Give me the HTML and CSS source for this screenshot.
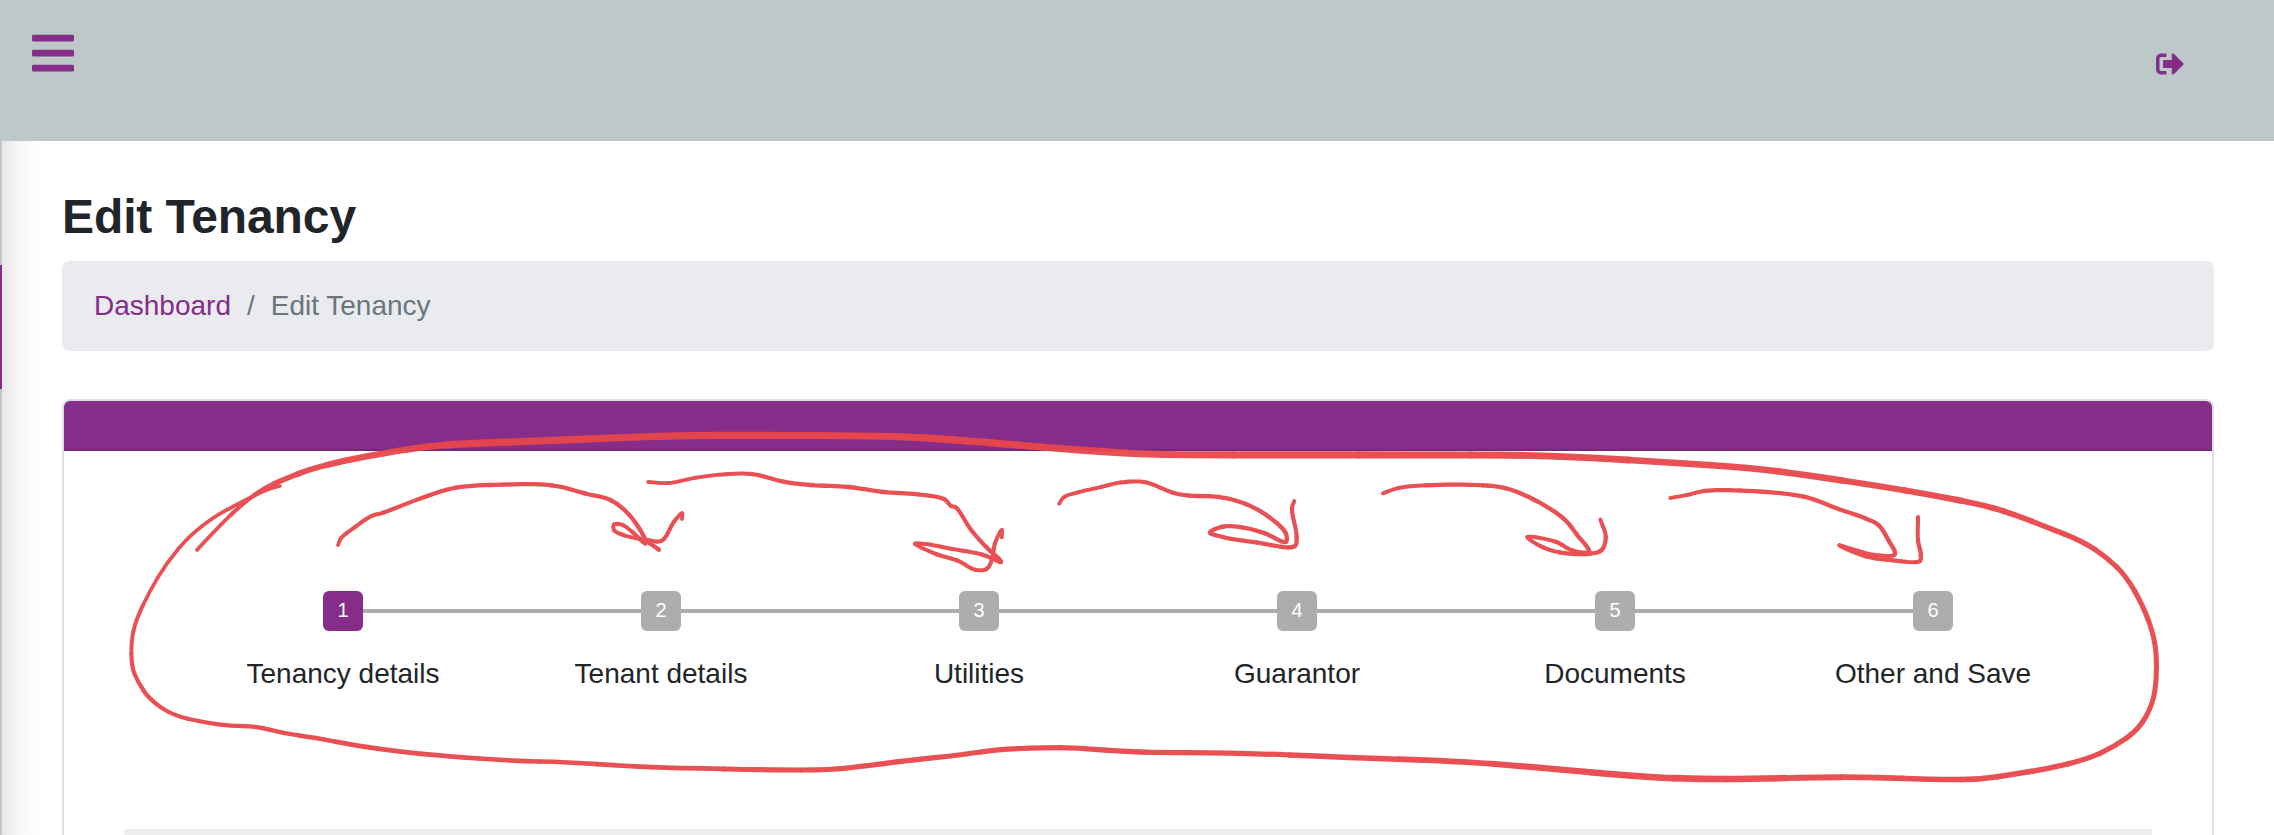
FILE: index.html
```html
<!DOCTYPE html>
<html lang="en">
<head>
<meta charset="utf-8">
<title>Edit Tenancy</title>
<link rel="stylesheet" href="styles.css">
</head>
<body>
<header class="topbar">
  <button class="icon-button" aria-label="Menu">
    <svg class="icon-bars" viewBox="0 0 448 512"><path d="M16 132h416c8.837 0 16-7.163 16-16V76c0-8.837-7.163-16-16-16H16C7.163 60 0 67.163 0 76v40c0 8.837 7.163 16 16 16zm0 160h416c8.837 0 16-7.163 16-16v-40c0-8.837-7.163-16-16-16H16c-8.837 0-16 7.163-16 16v40c0 8.837 7.163 16 16 16zm0 160h416c8.837 0 16-7.163 16-16v-40c0-8.837-7.163-16-16-16H16c-8.837 0-16 7.163-16 16v40c0 8.837 7.163 16 16 16z"/></svg>
  </button>
  <button class="icon-button" aria-label="Sign out">
    <svg class="icon-signout" viewBox="0 0 512 512"><path d="M497 273L329 441c-15 15-41 4.500-41-17v-96H152c-13.300 0-24-10.700-24-24v-96c0-13.300 10.700-24 24-24h136V88c0-21.400 25.900-32 41-17l168 168c9.300 9.400 9.300 24.600 0 34zM192 436v-40c0-6.600-5.400-12-12-12H96c-17.700 0-32-14.300-32-32V160c0-17.700 14.300-32 32-32h84c6.600 0 12-5.400 12-12V76c0-6.600-5.400-12-12-12H96c-53 0-96 43-96 96v192c0 53 43 96 96 96h84c6.600 0 12-5.400 12-12z"/></svg>
  </button>
</header>
<div class="layout">
  <aside class="sidebar"><div class="sidebar-active"></div></aside>
  <main class="content">
    <h1 class="title">Edit Tenancy</h1>
    <nav class="breadcrumb">
      <a class="crumb-link" href="#">Dashboard</a>
      <span class="crumb">/</span>
      <span class="crumb">Edit Tenancy</span>
    </nav>
    <section class="card">
      <div class="card-header"></div>
      <div class="card-body">
        <ol class="steps">
          <li class="step active"><span class="badge">1</span><span class="label">Tenancy details</span></li>
          <li class="step"><span class="badge">2</span><span class="label">Tenant details</span></li>
          <li class="step"><span class="badge">3</span><span class="label">Utilities</span></li>
          <li class="step"><span class="badge">4</span><span class="label">Guarantor</span></li>
          <li class="step"><span class="badge">5</span><span class="label">Documents</span></li>
          <li class="step"><span class="badge">6</span><span class="label">Other and Save</span></li>
        </ol>
        <div class="panel"></div>
      </div>
    </section>
  </main>
</div>
<svg class="ink" viewBox="0 0 2274 835" width="2274" height="835"><g id="ink" class="ink-strokes"></g></svg>
<script src="ink.js"></script>
</body>
</html>
```
FILE: styles.css
```css
* { box-sizing: border-box; }
body {
  margin: 0;
  height: 835px;
  overflow: hidden;
  display: flex;
  flex-direction: column;
  background: #fff;
  color: #212529;
  font-family: "Liberation Sans", Arial, sans-serif;
  font-size: 28px;
}
.topbar {
  height: 141px;
  flex: none;
  display: flex;
  justify-content: space-between;
  align-items: flex-start;
  padding: 28.7px 90px 0 32px;
  background: #bdc9c9;
}
.icon-button {
  display: flex;
  padding: 0;
  border: 0;
  background: none;
  fill: #852d89;
}
.icon-bars { width: 42px; height: 48px; }
.icon-signout { width: 28px; height: 28px; margin-top: 21.5px; }
.layout { flex: 1; min-height: 0; display: flex; }
.sidebar {
  width: 2px;
  flex: none;
  padding-top: 124px;
  background: #bdc9c9;
}
.sidebar-active { height: 124px; background: #852d89; }
.content {
  flex: 1;
  padding: 47px 60px 0;
  background: linear-gradient(to right, #e6e6e6 0, #ededed 6px, #f5f5f5 14px, #fafafa 22px, #fdfdfd 30px, #fff 42px);
}
.title {
  margin: 0 0 15px;
  font-size: 48px;
  line-height: 58px;
  font-weight: 700;
  letter-spacing: -.1px;
}
.breadcrumb {
  height: 90px;
  display: flex;
  align-items: center;
  gap: 16px;
  padding: 0 32px 1px;
  border-radius: 8px;
  background: #e9ebee;
}
.crumb-link { color: #852d89; text-decoration: none; }
.crumb { color: #6c757d; }
.card {
  height: 460px;
  margin-top: 48px;
  border: 2px solid #dfdfdf;
  border-radius: 8px;
  background: #fff;
  overflow: hidden;
}
.card-header {
  height: 50px;
  background: #852d89;
  border-bottom: 2px solid #752879;
}
.card-body { padding: 140px 60px 0; }
.steps {
  display: flex;
  margin: 0;
  padding: 0 60px;
  list-style: none;
}
.step {
  flex: 1;
  display: grid;
  grid-template-columns: 1fr 40px 1fr;
  align-items: center;
}
.step::before, .step::after { content: ""; height: 4px; background: #adadad; grid-row: 1; }
.step::before { grid-column: 1; }
.step::after { grid-column: 3; }
.step:first-child::before, .step:last-child::after { background: none; }
.badge {
  grid-area: 1 / 2;
  height: 40px;
  border-radius: 6px;
  background: #adadad;
  color: #fff;
  font-size: 20px;
  line-height: 38px;
  text-align: center;
}
.active .badge { background: #852d89; }
.label {
  grid-area: 2 / 1 / 3 / 4;
  margin-top: 27px;
  line-height: 32px;
  text-align: center;
}
.panel { height: 60px; margin-top: 139px; background: #efefef; }
.ink {
  position: absolute;
  left: 0;
  top: 0;
  pointer-events: none;
}
.ink-strokes { opacity: .95; stroke: #e8474b; stroke-linecap: round; fill: none; }
```
FILE: ink.js
```js
// Pen strokes as x, y, width triples.
const loop = [[197,550,3.5],[218.6,526.7,3.5],[243.5,502.7,4],[264.5,488,4.5],[283.7,479.5,5],[310.5,469,5.5],[345,460.5,6],[383,453.3,6],[429,446,6.7],[467,443.7,7],[544,440.7,7],[597.5,438.7,7],[676.5,435.3,7],[753,435.3,7],[868,435.7,7],[925,437.7,7],[982.7,442,7],[1051.5,448,7],[1116.6,452.7,7],[1166,454.8,7],[1300,454.8,7],[1418,455,7],[1525,455,6.7],[1590,457.7,6.7],[1666.6,462.3,6.5],[1750.5,467.7,6.3],[1808,475.3,6.2],[1877,485.7,6],[1934,495.3,6],[1987.8,506,5.7],[2018.4,516,5.5],[2045,526.3,5.2],[2083.5,541.7,5],[2107,557.5,5],[2126.5,576.5,5],[2143.3,606.5,5],[2152.8,632.3,4.8],[2156.5,653.3,4.8],[2156.5,680,4.8],[2153,703.3,4.8],[2139.5,728.8,5],[2114,746.9,5],[2087,759.2,5],[2049,768.5,5.2],[2015,774,5.2],[1980,779.5,5.2],[1942,779.6,5.3],[1865,777.2,5.5],[1819.4,777.2,5.7],[1750.5,779,6.3],[1701,779,6.5],[1647.5,777.3,6.3],[1532.7,767,6],[1456,761,5.7],[1341,757.3,5.3],[1238,752.7,5],[1135.7,752.7,5],[1074.5,747.7,5],[1044,747.7,5],[998,749.3,5],[963.5,754.7,5],[906,760.7,5],[865,766,5],[829.6,770,5],[772,770,5],[676.5,768,4.7],[628,766.3,4.7],[566.9,762,4.5],[513.3,761,4.5],[444.4,756,4.5],[398.5,751.7,4.5],[356.4,745.7,4.5],[314.3,737.5,4.3],[283.7,733.3,4.2],[257,726.3,4.2],[230,725.9,4],[203.3,722.2,4],[172.2,715.2,4],[149,699,4],[138,682,4],[131.5,667,4],[131.3,640,3.7],[136,620,3.7],[149.3,591.7,3.5],[166.5,563,3.5],[189.5,535.5,3.5],[214.8,516.4,3.5],[237.8,504,3.5],[268.4,488.3,3.5],[279.9,486,3.5]];

const arrows = [
  [[338,545,3.5],[341,538.3,3.6],[355,527,3.7],[371.7,516,3.8],[383,512.7,3.8],[425.3,496.7,4],[455.9,487.7,4],[501.8,484.7,4],[551.6,485.3,4],[586,493.7,4],[610.9,500.3,4],[630,515.7,4],[645.3,540,4],[645.3,543.3,4],[632,531.7,3.7],[622.3,524.9,3.7],[614,524.5,3.7],[614,530,3.7],[622.3,534.7,3.7],[647.2,540,3.8],[661.8,540.7,3.8],[674,521.7,3.8],[682,513.3,3.5],[682,519,3.5]],
  [[645,540,4],[659,549.7,4]],
  [[648.2,482,3.5],[668.9,483,3.5],[695.7,477.7,3.5],[726.3,474.2,3.7],[753,474.2,3.8],[783.7,481.7,4],[810.5,485,4],[848.7,487,4],[883.2,492,4],[917.6,494.3,4],[944.4,499.3,3.8],[951,506,3.8],[955.9,507.5,3.8],[971.2,530,3.8],[986.5,547.3,4],[999,559,4],[1001,562,4],[982.7,554.7,3.8],[952,548.9,3.8],[925.3,544,3.7],[915,543.7,3.5],[936.8,554.3,3.8],[957.8,560.7,3.8],[975,569.7,3.8],[986.5,569,3.8],[991.9,560,3.8],[995,543.3,3.8],[1001.8,530,3.5],[1001.8,537.3,3.5]],
  [[1059.2,503.7,3.5],[1063.8,497.3,3.5],[1078.3,492.3,3.5],[1101.3,487,3.7],[1120.4,482.5,3.7],[1145.3,482.3,3.8],[1173,492.7,3.8],[1188.3,495.5,4],[1218.9,497,4],[1245.7,504,4],[1268.6,516.7,4],[1285.8,533.3,4],[1285.8,542,4],[1264.8,533.3,4],[1241.8,527.3,4],[1222.7,526.7,4],[1210,532.5,4],[1222.7,537,4],[1257,542.5,4],[1294.6,546.3,4],[1296.6,536.7,4],[1292,508.3,3.8],[1294.3,501,3.5]],
  [[1383,493.3,3.5],[1398.7,488,3.7],[1425.5,485.3,3.8],[1483,485.3,4],[1505.9,488.3,4],[1532.7,499,4],[1563.3,518.3,4],[1576.7,534.3,4],[1589,551.7,4],[1572.9,550.7,4],[1555.6,541.7,3.8],[1527.3,537,3.5],[1540.3,546,3.7],[1559.5,552.3,4],[1590,553.7,4],[1601.6,550,4],[1605.8,536.7,4],[1600.4,519.7,3.5]],
  [[1670.4,498,3.5],[1687,495,3.7],[1705,490.9,3.8],[1739,490.5,4],[1804,496.7,4],[1838.5,509,4],[1865.3,518.3,4],[1878.7,525.3,4],[1888.3,540,4],[1894.8,554.3,4],[1874.9,555,3.7],[1839.3,545.3,3.5],[1865.3,556.3,3.7],[1892,560.3,3.8],[1919.7,561,4],[1920.8,555,4],[1918,540,4],[1918,517,3.5]]
];

const ink = document.getElementById("ink");
const STEPS = 8;

function addPath(d, width) {
  const path = document.createElementNS("http://www.w3.org/2000/svg", "path");
  path.setAttribute("d", d);
  path.setAttribute("stroke-width", width);
  path.setAttribute("stroke-linejoin", "round");
  ink.appendChild(path);
}

// The loop is smoothed through the midpoints of its points.
for (let i = 1; i < loop.length - 1; i++) {
  const mid = (a, b) => [(a[0] + b[0]) / 2, (a[1] + b[1]) / 2];
  const start = i === 1 ? loop[0].slice(0, 2) : mid(loop[i - 1], loop[i]);
  const end = i === loop.length - 2 ? loop[i + 1].slice(0, 2) : mid(loop[i], loop[i + 1]);
  addPath(`M${start}Q${loop[i].slice(0, 2)} ${end}`, loop[i][2] + 0.2);
}

// Catmull-Rom with chord-length tangents, so that sharp turns do not overshoot.
function sample(p0, p1, p2, p3, t) {
  const dist = (a, b) => Math.sqrt(Math.hypot(b[0] - a[0], b[1] - a[1])) || 0.001;
  const a = dist(p0, p1), b = dist(p1, p2), c = dist(p2, p3);
  return [0, 1].map(k => {
    const m1 = b * ((p1[k] - p0[k]) / a - (p2[k] - p0[k]) / (a + b)) + p2[k] - p1[k];
    const m2 = b * ((p3[k] - p2[k]) / c - (p3[k] - p1[k]) / (b + c)) + p2[k] - p1[k];
    const t2 = t * t, t3 = t2 * t;
    return (2 * t3 - 3 * t2 + 1) * p1[k] + (t3 - 2 * t2 + t) * m1 + (3 * t2 - 2 * t3) * p2[k] + (t3 - t2) * m2;
  });
}

for (const pts of arrows) {
  for (let i = 0; i < pts.length - 1; i++) {
    const p1 = pts[i], p2 = pts[i + 1];
    const p0 = pts[i - 1] || [2 * p1[0] - p2[0], 2 * p1[1] - p2[1]];
    const p3 = pts[i + 2] || [2 * p2[0] - p1[0], 2 * p2[1] - p1[1]];
    let d = "M" + p1[0] + " " + p1[1];
    for (let s = 1; s <= STEPS; s++) {
      const q = sample(p0, p1, p2, p3, s / STEPS);
      d += "L" + q[0].toFixed(2) + " " + q[1].toFixed(2);
    }
    addPath(d, (p1[2] + p2[2]) / 2 + 0.3);
  }
}
```
